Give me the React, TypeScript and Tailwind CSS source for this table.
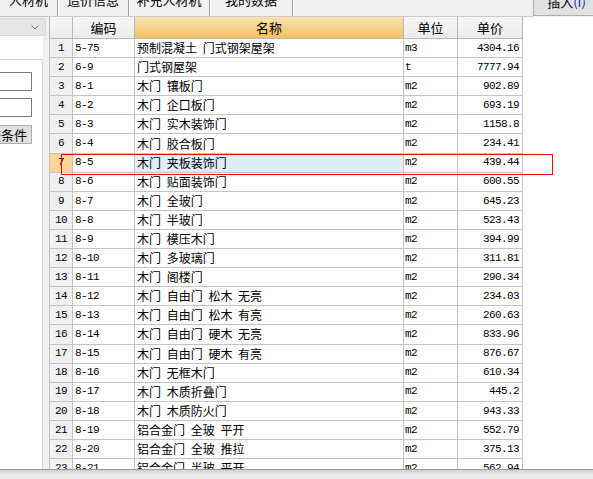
import React from "react";

const rows: [string, string, string, string][] = [
  ["5-75", "预制混凝土 门式钢架屋架", "m3", "4304.16"],
  ["6-9", "门式钢屋架", "t", "7777.94"],
  ["8-1", "木门 镶板门", "m2", "902.89"],
  ["8-2", "木门 企口板门", "m2", "693.19"],
  ["8-3", "木门 实木装饰门", "m2", "1158.8"],
  ["8-4", "木门 胶合板门", "m2", "234.41"],
  ["8-5", "木门 夹板装饰门", "m2", "439.44"],
  ["8-6", "木门 贴面装饰门", "m2", "600.55"],
  ["8-7", "木门 全玻门", "m2", "645.23"],
  ["8-8", "木门 半玻门", "m2", "523.43"],
  ["8-9", "木门 模压木门", "m2", "394.99"],
  ["8-10", "木门 多玻璃门", "m2", "311.81"],
  ["8-11", "木门 阁楼门", "m2", "290.34"],
  ["8-12", "木门 自由门 松木 无亮", "m2", "234.03"],
  ["8-13", "木门 自由门 松木 有亮", "m2", "260.63"],
  ["8-14", "木门 自由门 硬木 无亮", "m2", "833.96"],
  ["8-15", "木门 自由门 硬木 有亮", "m2", "876.67"],
  ["8-16", "木门 无框木门", "m2", "610.34"],
  ["8-17", "木门 木质折叠门", "m2", "445.2"],
  ["8-18", "木门 木质防火门", "m2", "943.33"],
  ["8-19", "铝合金门 全玻 平开", "m2", "552.79"],
  ["8-20", "铝合金门 全玻 推拉", "m2", "375.13"],
  ["8-21", "铝合金门 半玻 平开", "m2", "562.94"],
];

const cjk = { fontFamily: '"Noto Sans CJK SC", "Noto Sans", sans-serif' };
const mono = { fontFamily: '"Liberation Mono", "Noto Sans CJK SC", monospace' };

const tabs = [
  { label: "人材机", w: "w-[58px]" },
  { label: "造价信息", w: "w-[71px]" },
  { label: "补充人材机", w: "w-[81px]" },
  { label: "我的数据", w: "w-[83px]" },
];

export default function App() {
  return (
    <div
      className="w-[593px] h-[479px] bg-[#f0f0f0] overflow-hidden flex flex-col relative text-black"
      style={cjk}
    >
      {/* top tab strip */}
      <div className="h-[17px] shrink-0 flex">
        <div className="flex flex-1 border-b border-[#c9c9c9]">
          {tabs.map((t) => (
            <div
              key={t.label}
              className={`${t.w} h-[16px] overflow-hidden flex justify-center border-r border-[#a0a0a0] shadow-[1px_0_0_#ffffff]`}
            >
              <span className="text-[13px] leading-[13px] -mt-[7px] whitespace-nowrap">{t.label}</span>
            </div>
          ))}
        </div>
        <div className="w-[60px] h-[16px] bg-[#e1e1e1] border-l border-b border-[#adadad] overflow-hidden flex justify-center">
          <span className="text-[13px] leading-[13px] -mt-[5px] pl-[6px] whitespace-nowrap">
            插入<span className="text-[#0b2fa8]">(I)</span>
          </span>
        </div>
      </div>

      {/* main area */}
      <div className="flex flex-1 min-h-0">
        {/* left panel */}
        <div className="w-[46px] shrink-0 flex flex-col bg-[#f0f0f0]">
          <div className="mt-[1px] h-[18px] bg-[#e5e5e5] border-y border-r border-[#d9d9d9] flex items-center justify-end pr-[6px]">
            <svg width="8" height="5" viewBox="0 0 8 5">
              <path d="M0.5 0.5 L4 4 L7.5 0.5" fill="none" stroke="#707070" strokeWidth="1" />
            </svg>
          </div>
          <div className="h-[23px] w-[43px] bg-white" />
          <div className="flex-1 w-[43px] bg-white border-t border-r border-[#d5d5d5] flex flex-col">
            <div className="mt-[12px] w-[32px] h-[19px] bg-white border border-l-0 border-[#7a7a7a]" />
            <div className="mt-[7px] w-[32px] h-[19px] bg-white border border-l-0 border-[#7a7a7a]" />
            <div className="mt-[8px] w-[32px] h-[19px] bg-[#e1e1e1] border border-l-0 border-[#adadad] flex items-center justify-end pr-[4px] overflow-hidden">
              <span className="text-[13px] leading-[13px] whitespace-nowrap">查条件</span>
            </div>
          </div>
        </div>

        {/* table */}
        <div className="flex-1 ml-[3px] bg-white overflow-hidden relative">
          <div className="flex h-[22px] text-[13px]">
            <div className="w-[24px] h-full border-l border-r border-b border-[#b8b8b8] bg-gradient-to-b from-[#f7f7f7] to-[#ebebeb]" />
            <div className="w-[62px] h-full border-r border-b border-[#b8b8b8] bg-gradient-to-b from-[#f7f7f7] to-[#ebebeb] flex items-center justify-center">
              编码
            </div>
            <div className="w-[269px] h-full border-r border-b border-[#b8b8b8] bg-gradient-to-b from-[#fbe2b0] to-[#f2c262] flex items-center justify-center">
              名称
            </div>
            <div className="w-[54px] h-full border-r border-b border-[#b8b8b8] bg-gradient-to-b from-[#f7f7f7] to-[#ebebeb] flex items-center justify-center">
              单位
            </div>
            <div className="w-[65px] h-full border-r border-b border-[#b8b8b8] bg-gradient-to-b from-[#f7f7f7] to-[#ebebeb] flex items-center justify-center">
              单价
            </div>
          </div>
          {rows.map((r, i) => {
            const sel = i === 6;
            return (
              <div key={i} className="flex h-[19.1px]">
                <div
                  className={`w-[24px] h-full border-l border-r border-b border-[#c4c4c4] flex items-center justify-center text-[11px] tracking-[-0.6px] ${
                    sel ? "bg-[#fdd699]" : "bg-[#f0f0f0]"
                  }`}
                  style={mono}
                >
                  {i + 1}
                </div>
                <div
                  className="w-[62px] h-full border-r border-b border-[#c4c4c4] flex items-center pl-[2px] text-[11px] tracking-[-0.6px]"
                  style={mono}
                >
                  {r[0]}
                </div>
                <div
                  className={`w-[269px] h-full border-r border-b border-[#c4c4c4] flex items-center pl-[2px] text-[12px] whitespace-pre [word-spacing:3px] ${
                    sel ? "bg-[#e0eefc]" : ""
                  }`}
                >
                  {r[1]}
                </div>
                <div
                  className="w-[54px] h-full border-r border-b border-[#c4c4c4] flex items-center pl-[1px] text-[11px] tracking-[-0.6px]"
                  style={mono}
                >
                  {r[2]}
                </div>
                <div
                  className="w-[65px] h-full border-r border-b border-[#c4c4c4] flex items-center justify-end pr-[3px] text-[11px] tracking-[-0.6px]"
                  style={mono}
                >
                  {r[3]}
                </div>
              </div>
            );
          })}
          {/* red annotation box */}
          <div className="absolute left-[12px] top-[137px] w-[492px] h-[21px] border border-[#ff0000] pointer-events-none" />
        </div>
      </div>

      {/* bottom edge */}
      <div className="h-[10px] shrink-0 border-t border-[#9a9a9a] bg-gradient-to-b from-[#cfcfcf] via-[#ececec] to-[#f0f0f0]" />
    </div>
  );
}
